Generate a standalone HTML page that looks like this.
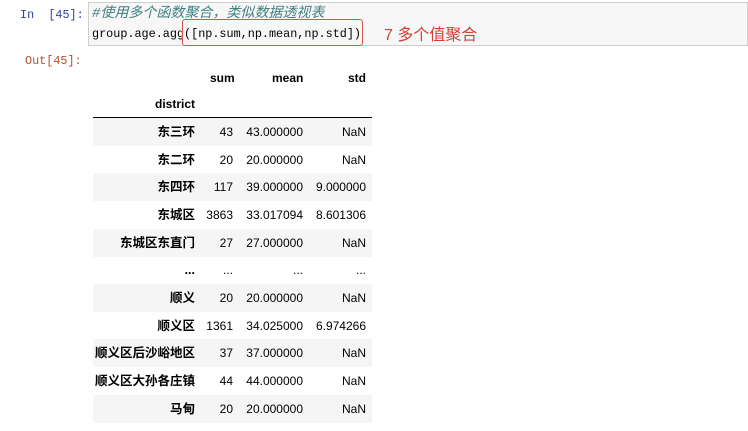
<!DOCTYPE html>
<html><head><meta charset="utf-8"><style>
body{margin:0;width:748px;height:431px;background:#fff;position:relative;overflow:hidden;font-family:"Liberation Sans","Noto Sans CJK SC",sans-serif}
.mono{font-family:"Liberation Mono","Noto Sans CJK SC",monospace;font-size:11.8px;line-height:14px}
.a{position:absolute;white-space:nowrap}
.row{position:absolute;left:93px;width:279px;height:28px;font-size:12px;color:#000}
.row span{position:absolute;top:7px;line-height:14px;height:14px;text-align:right}
.s{background:#f5f5f5}
.i{right:177px;font-weight:bold;font-size:12.5px}
.c1{right:139px}.c2{right:69px}.c3{right:6px}
</style></head><body>
<div class="a mono" style="left:20px;top:8px;color:#303f9f">In&nbsp;&nbsp;[45]:</div>
<div class="a" style="left:88px;top:2px;width:660px;height:44px;background:#f7f7f7;border:1px solid #cfcfcf;box-sizing:border-box"></div>
<div class="a mono" style="left:92px;top:6px;color:#408080;font-style:italic;font-size:14px;line-height:16px">#使用多个函数聚合，类似数据透视表</div>
<div class="a mono" style="left:92px;top:27px;color:#000">group.age.agg([np.sum,np.mean,np.std])</div>
<div class="a" style="left:182px;top:19px;width:181px;height:27px;border:1px solid #d9534f;border-radius:3px;box-sizing:border-box"></div>
<div class="a" style="left:384px;top:27px;color:#d0403a;font-size:16px;line-height:18px">7 多个值聚合</div>
<div class="a mono" style="left:25px;top:54px;color:#b05030">Out[45]:</div>
<div class="a" style="left:210px;top:71px;font-size:12px;font-weight:bold">sum</div>
<div class="a" style="left:272px;top:71px;font-size:12px;font-weight:bold">mean</div>
<div class="a" style="left:348px;top:71px;font-size:12px;font-weight:bold">std</div>
<div class="a" style="left:155px;top:97px;font-size:12px;font-weight:bold">district</div>
<div class="a" style="left:93px;top:117px;width:279px;height:1px;background:#000"></div>
<div class="row s" style="top:118px"><span class="i">东三环</span><span class="c1">43</span><span class="c2">43.000000</span><span class="c3">NaN</span></div>
<div class="row" style="top:146px"><span class="i">东二环</span><span class="c1">20</span><span class="c2">20.000000</span><span class="c3">NaN</span></div>
<div class="row s" style="top:173px"><span class="i">东四环</span><span class="c1">117</span><span class="c2">39.000000</span><span class="c3">9.000000</span></div>
<div class="row" style="top:201px"><span class="i">东城区</span><span class="c1">3863</span><span class="c2">33.017094</span><span class="c3">8.601306</span></div>
<div class="row s" style="top:229px"><span class="i">东城区东直门</span><span class="c1">27</span><span class="c2">27.000000</span><span class="c3">NaN</span></div>
<div class="row" style="top:256px"><span class="i">...</span><span class="c1">...</span><span class="c2">...</span><span class="c3">...</span></div>
<div class="row s" style="top:284px"><span class="i">顺义</span><span class="c1">20</span><span class="c2">20.000000</span><span class="c3">NaN</span></div>
<div class="row" style="top:312px"><span class="i">顺义区</span><span class="c1">1361</span><span class="c2">34.025000</span><span class="c3">6.974266</span></div>
<div class="row s" style="top:339px"><span class="i">顺义区后沙峪地区</span><span class="c1">37</span><span class="c2">37.000000</span><span class="c3">NaN</span></div>
<div class="row" style="top:367px"><span class="i">顺义区大孙各庄镇</span><span class="c1">44</span><span class="c2">44.000000</span><span class="c3">NaN</span></div>
<div class="row s" style="top:395px"><span class="i">马甸</span><span class="c1">20</span><span class="c2">20.000000</span><span class="c3">NaN</span></div>
</body></html>
